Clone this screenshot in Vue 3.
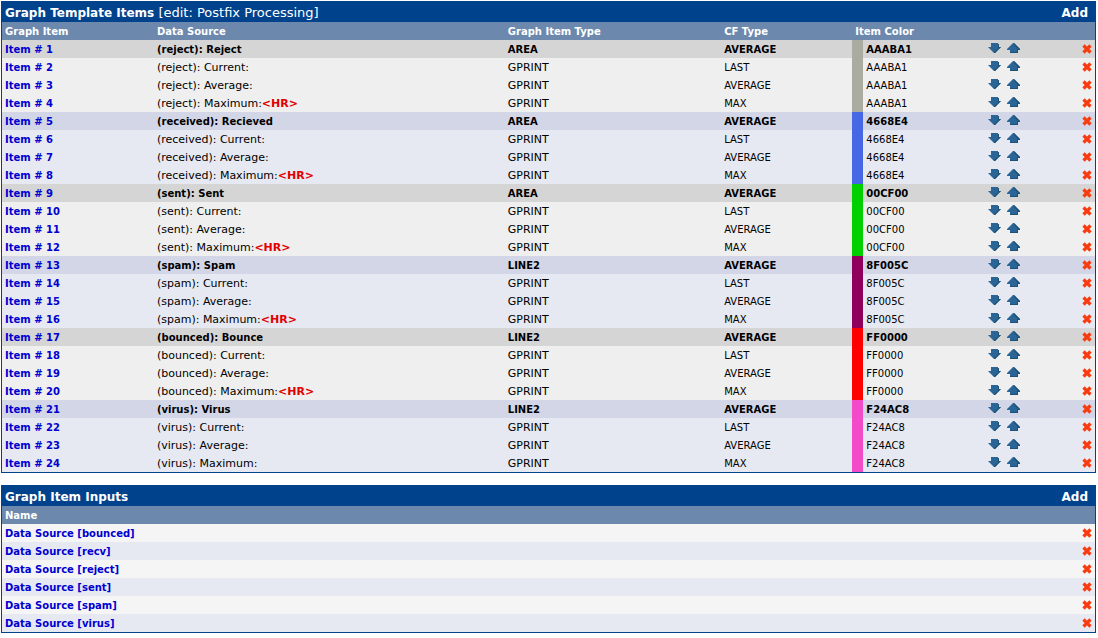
<script setup>
const sources = [
  { key: 'reject', label: 'Reject', type: 'AREA', color: 'AAABA1' },
  { key: 'received', label: 'Recieved', type: 'AREA', color: '4668E4' },
  { key: 'sent', label: 'Sent', type: 'AREA', color: '00CF00' },
  { key: 'spam', label: 'Spam', type: 'LINE2', color: '8F005C' },
  { key: 'bounced', label: 'Bounce', type: 'LINE2', color: 'FF0000' },
  { key: 'virus', label: 'Virus', type: 'LINE2', color: 'F24AC8' },
]

const items = sources.flatMap((s, g) => {
  const tone = g % 2 ? 'blue' : 'grey'
  const last = g === sources.length - 1
  return [
    { text: s.label, type: s.type, cf: 'AVERAGE', main: true },
    { text: 'Current:', type: 'GPRINT', cf: 'LAST' },
    { text: 'Average:', type: 'GPRINT', cf: 'AVERAGE' },
    { text: 'Maximum:', type: 'GPRINT', cf: 'MAX', hr: !last },
  ].map((row, i) => ({ ...row, source: s.key, color: s.color, tone, id: g * 4 + i + 1 }))
})

const inputs = ['bounced', 'recv', 'reject', 'sent', 'spam', 'virus']
</script>

<template>
  <main class="page">
    <section class="panel">
      <header class="bar">
        <h2>Graph Template Items <span>[edit: Postfix Processing]</span></h2>
        <a href="#add-item">Add</a>
      </header>
      <table>
        <colgroup>
          <col class="c-item"><col class="c-source"><col class="c-type"><col class="c-cf">
          <col class="c-swatch"><col class="c-hex"><col class="c-move"><col>
        </colgroup>
        <thead>
          <tr>
            <th>Graph Item</th>
            <th>Data Source</th>
            <th>Graph Item Type</th>
            <th>CF Type</th>
            <th colspan="4">Item Color</th>
          </tr>
        </thead>
        <tbody>
          <tr v-for="item in items" :key="item.id" :class="[item.tone, { main: item.main }]">
            <td><a class="link" :href="'#item-' + item.id">Item # {{ item.id }}</a></td>
            <td class="wide">({{ item.source }}): {{ item.text }}<strong v-if="item.hr" class="hr">&lt;HR&gt;</strong></td>
            <td class="wide">{{ item.type }}</td>
            <td>{{ item.cf }}</td>
            <td :style="{ backgroundColor: '#' + item.color }"></td>
            <td>{{ item.color }}</td>
            <td class="icons">
              <div class="moves">
                <button type="button" :aria-label="'Move item ' + item.id + ' down'">
                  <svg width="13" height="10" viewBox="0 0 13 10"><path d="M3 0h7v4h3L7 10H6L0 4h3z" fill="#2a6596" /><path d="M10 1h1v3h2L7 10H6V9l5-4h-1z" fill="#1d5175" /></svg>
                </button>
                <button type="button" :aria-label="'Move item ' + item.id + ' up'">
                  <svg width="13" height="10" viewBox="0 0 13 10"><path d="M6 0h1l6 6v1h-2v3H3V7H0V6z" fill="#2a6596" /><path d="M7 0l6 6v1h-2v3H3V9h7V6h1L7 2z" fill="#1d5175" /></svg>
                </button>
              </div>
            </td>
            <td class="icons">
              <button type="button" class="delete" :aria-label="'Delete item ' + item.id">
                <svg width="10" height="10" viewBox="0 0 10 10"><path d="M1.5 1.5l7 7M8.5 1.5l-7 7" stroke="#f83c10" stroke-width="3.2" /></svg>
              </button>
            </td>
          </tr>
        </tbody>
      </table>
    </section>

    <section class="panel">
      <header class="bar">
        <h2>Graph Item Inputs</h2>
        <a href="#add-input">Add</a>
      </header>
      <table>
        <colgroup><col><col class="c-delete"></colgroup>
        <thead>
          <tr><th colspan="2">Name</th></tr>
        </thead>
        <tbody>
          <tr v-for="(name, i) in inputs" :key="name" :class="i % 2 ? 'blue' : 'light'">
            <td><a class="link" :href="'#input-' + name">Data Source [{{ name }}]</a></td>
            <td class="icons">
              <button type="button" class="delete" :aria-label="'Delete input ' + name">
                <svg width="10" height="10" viewBox="0 0 10 10"><path d="M1.5 1.5l7 7M8.5 1.5l-7 7" stroke="#f83c10" stroke-width="3.2" /></svg>
              </button>
            </td>
          </tr>
        </tbody>
      </table>
    </section>
  </main>
</template>

<style>
body {
  background: #fff;
}
</style>

<style scoped>
.page {
  display: flex;
  flex-direction: column;
  gap: 12px;
  padding: 1px 2px 4px 1px;
  font-family: Verdana, "DejaVu Sans", sans-serif;
  font-size: 10px;
  line-height: 16px;
  color: #000;
}
.panel {
  border: 1px solid #00438c;
}
.bar {
  display: flex;
  justify-content: space-between;
  align-items: center;
  padding: 2px 7px 0 3px;
  background: #00438c;
  color: #fff;
  font-size: 12px;
  line-height: 18px;
}
.bar h2 {
  margin: 0;
  font-size: 12px;
  font-weight: bold;
}
.bar h2 span {
  font-size: 13px;
  line-height: 16px;
  font-weight: normal;
}
.bar a {
  color: #fff;
  font-weight: bold;
  text-decoration: none;
}
table {
  width: 100%;
  table-layout: fixed;
  border-collapse: collapse;
}
.c-item { width: 13.9%; }
.c-source { width: 32.1%; }
.c-type { width: 19.8%; }
.c-cf { width: 12%; }
.c-swatch { width: 11px; }
.c-hex { width: 11.1%; }
.c-move { width: 5%; }
.c-delete { width: 24px; }
th,
td {
  height: 16px;
  padding: 2px 3px 0;
  text-align: left;
  white-space: nowrap;
}
th {
  background: #6d88ad;
  color: #fff;
  font-weight: bold;
}
.grey { background: #efefef; }
.blue { background: #e7e9f2; }
.light { background: #f5f5f5; }
.grey.main { background: #d5d5d5; }
.blue.main { background: #d2d6e7; }
.main { font-weight: bold; }
.wide { font-size: 11px; }
.main .wide { font-size: 10px; }
.link {
  color: #0000d0;
  font-weight: bold;
  text-decoration: none;
}
.hr {
  color: #e00000;
}
.icons {
  padding: 0 3px 2px;
}
.moves {
  display: flex;
  gap: 6px;
  height: 16px;
  align-items: center;
}
button {
  display: block;
  padding: 0;
  border: 0;
  background: none;
  cursor: pointer;
}
.delete {
  margin: 2px 0 0 auto;
}
svg {
  display: block;
}
</style>
